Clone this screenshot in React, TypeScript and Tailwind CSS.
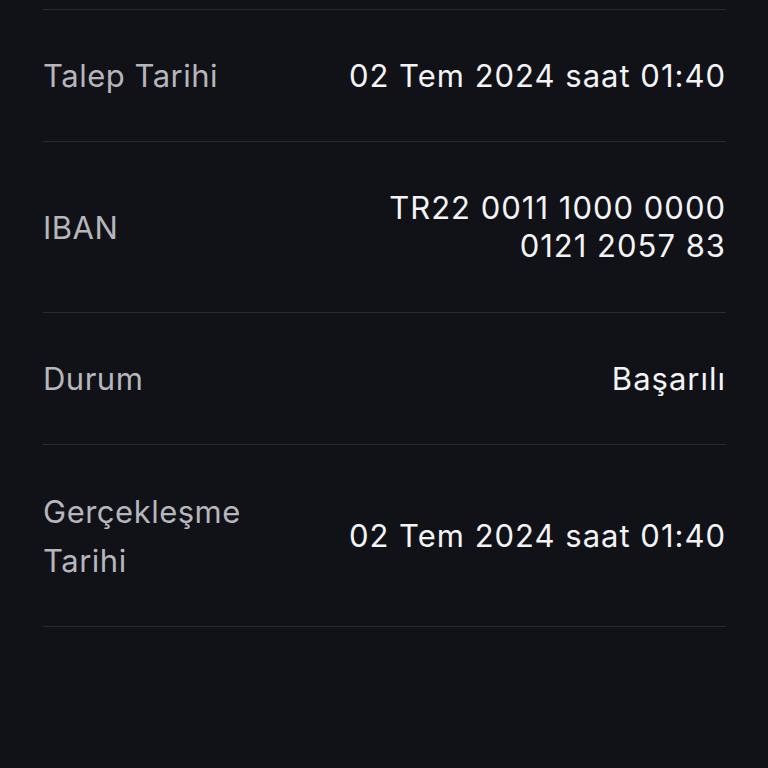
import React from 'react';

interface Row {
  label: string;
  value: string;
  height: string;
}

const rows: Row[] = [
  { label: 'Talep Tarihi', value: '02 Tem 2024 saat 01:40', height: 'h-[132px]' },
  { label: 'IBAN', value: 'TR22 0011 1000 0000 0121 2057 83', height: 'h-[171px]' },
  { label: 'Durum', value: 'Başarılı', height: 'h-[132px]' },
  { label: 'Gerçekleşme Tarihi', value: '02 Tem 2024 saat 01:40', height: 'h-[182px]' },
];

const App: React.FC = () => {
  return (
    <div
      className="min-h-screen bg-[#111217] pt-[9px]"
      style={{ fontFamily: 'Inter, "Noto Sans", sans-serif' }}
    >
      <div className="ml-[43px] mr-[42px] border-t border-[#2a2b31]">
        {rows.map((row) => (
          <div
            key={row.label}
            className={`flex items-center justify-between border-b border-[#2a2b31] ${row.height}`}
          >
            <span className="w-[240px] text-[31px] leading-[49px] tracking-[0.5px] text-[#b6b6bb]">
              {row.label}
            </span>
            <span className="max-w-[392px] text-right text-[31px] leading-[38px] tracking-[1px] text-[#f4f4f6]">
              {row.value}
            </span>
          </div>
        ))}
      </div>
    </div>
  );
};

export default App;
